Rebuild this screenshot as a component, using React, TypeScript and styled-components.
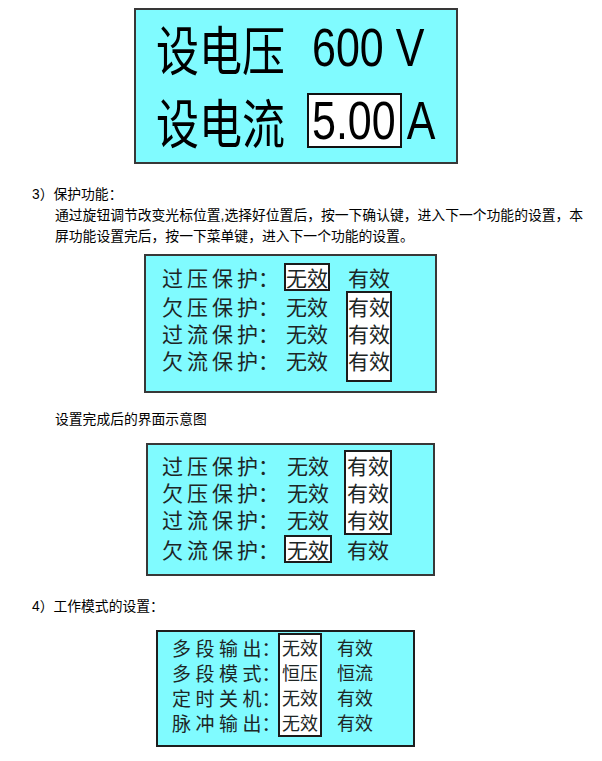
import React from "react";
import styled, { createGlobalStyle } from "styled-components";

const LCD_FILL = "#80fbff";
const INK = "#1b1b1b";
const CJK = `"Noto Sans CJK SC", sans-serif`;
const LATIN = `"Liberation Sans", "Noto Sans CJK SC", sans-serif`;

const GlobalStyle = createGlobalStyle`
  html, body {
    margin: 0;
    padding: 0;
    background: #fff;
  }
  body {
    font-family: ${LATIN};
    color: #000;
  }
`;

const Page = styled.div`
  width: 602px;
  padding-top: 8px;
  display: flex;
  flex-direction: column;
  align-items: flex-start;
`;

// cyan LCD screen frame
const Screen = styled.div<{
  $width: number;
  $left: number;
  $top?: number;
  $pad: string;
  $edge?: string;
}>`
  box-sizing: border-box;
  width: ${(p) => p.$width}px;
  margin: ${(p) => p.$top ?? 0}px 0 0 ${(p) => p.$left}px;
  padding: ${(p) => p.$pad};
  background: ${LCD_FILL};
  border: 2px solid ${(p) => p.$edge ?? "#383838"};
`;

/* ---- big voltage / current readout ---- */

const Readout = styled.div`
  display: grid;
  grid-template-columns: 151px auto 1fr;
  grid-auto-rows: 55px;
  row-gap: 18px;
  font-size: 43px;
  line-height: 55px;
  color: #000;
`;

const ReadoutLabel = styled.div`
  font-family: ${CJK};
  white-space: nowrap;
`;

const ReadoutValue = styled.div<{ $boxed?: boolean; $span?: boolean }>`
  box-sizing: border-box;
  justify-self: start;
  grid-column: ${(p) => (p.$span ? "2 / 4" : "auto")};
  font-family: ${LATIN};
  white-space: pre;
  line-height: 51px;
  padding: 0 4px 0 3px;
  border: 2px solid ${(p) => (p.$boxed ? "#111" : "transparent")};
  background: ${(p) => (p.$boxed ? "#fff" : "transparent")};
`;

const ReadoutUnit = styled.div`
  font-family: ${LATIN};
  padding-left: 5px;
`;

// the LCD font is tall and narrow
const Tall = styled.span`
  display: inline-block;
  transform: scaleY(1.25);
`;

/* ---- manual text ---- */

const Heading = styled.div<{ $top: number }>`
  margin: ${(p) => p.$top}px 0 0 32px;
  font-size: 13.8px;
  line-height: 21px;
  white-space: nowrap;
`;

const Para = styled.p<{ $top?: number }>`
  margin: ${(p) => p.$top ?? 0}px 0 0 0;
  padding-left: 55px;
  font-size: 13.8px;
  line-height: 21px;
  white-space: nowrap;
`;

/* ---- option screens ---- */

const Options = styled.div<{ $valueSize: number }>`
  display: flex;
  flex-direction: column;
  font-family: ${CJK};
  font-size: ${(p) => p.$valueSize}px;
  color: #1d2626;
`;

const Band = styled.div`
  display: flex;
  align-items: flex-start;
`;

const LabelColumn = styled.div<{
  $width: number;
  $size: number;
  $padBottom: number;
}>`
  flex: none;
  width: ${(p) => p.$width}px;
  display: flex;
  flex-direction: column;
  border-top: 2px solid transparent;
  border-bottom: 2px solid transparent;
  padding-bottom: ${(p) => p.$padBottom}px;
  font-size: ${(p) => p.$size}px;
`;

// wide tracking between label characters, none before the colon
const Spaced = styled.span<{ $spacing: number }>`
  letter-spacing: ${(p) => p.$spacing}px;
`;

const Cell = styled.div<{
  $boxed: boolean;
  $padX: number;
  $padBottom: number;
  $shift: number;
}>`
  flex: none;
  display: flex;
  flex-direction: column;
  margin-left: ${(p) => p.$shift}px;
  padding: 0 ${(p) => p.$padX}px ${(p) => p.$padBottom}px;
  border: 2px solid ${(p) => (p.$boxed ? INK : "transparent")};
  background: ${(p) => (p.$boxed ? "#fff" : "transparent")};
`;

const Entry = styled.div<{ $h: number }>`
  height: ${(p) => p.$h}px;
  line-height: ${(p) => p.$h}px;
  white-space: nowrap;
`;

type BandSpec = {
  rows: number;
  height: number;
  padBottom?: number;
  boxed: [boolean, boolean];
};

type OptionScreen = {
  labels: string[];
  columns: [string[], string[]];
  bands: BandSpec[];
  width: number;
  left: number;
  top: number;
  pad: string;
  edge?: string;
  labelWidth: number;
  labelSize: number;
  spacing: number;
  valueSize: number;
  padX: number;
  gap: number;
};

const fourEach = (s: string) => [s, s, s, s];

const protectionLabels = ["过压保护", "欠压保护", "过流保护", "欠流保护"];

const protectionEditing: OptionScreen = {
  labels: protectionLabels,
  columns: [fourEach("无效"), fourEach("有效")],
  bands: [
    { rows: 1, height: 24, boxed: [true, false] },
    { rows: 3, height: 27, padBottom: 6, boxed: [false, true] },
  ],
  width: 293,
  left: 144,
  top: 7,
  pad: "7px 0 9px 16px",
  labelWidth: 122,
  labelSize: 21,
  spacing: 4,
  valueSize: 21,
  padX: 0,
  gap: 16,
};

const protectionDone: OptionScreen = {
  labels: protectionLabels,
  columns: [fourEach("无效"), fourEach("有效")],
  bands: [
    { rows: 3, height: 27, boxed: [false, true] },
    { rows: 1, height: 24, boxed: [true, false] },
  ],
  width: 289,
  left: 146,
  top: 13,
  pad: "5px 0 11px 14px",
  labelWidth: 122,
  labelSize: 21,
  spacing: 4,
  valueSize: 21,
  padX: 1,
  gap: 12,
};

const workMode: OptionScreen = {
  labels: ["多段输出", "多段模式", "定时关机", "脉冲输出"],
  columns: [
    ["无效", "恒压", "无效", "无效"],
    ["有效", "恒流", "有效", "有效"],
  ],
  bands: [{ rows: 4, height: 25, boxed: [true, false] }],
  width: 259,
  left: 156,
  top: 13,
  pad: "1px 0 8px 14px",
  edge: "#1e1e1e",
  labelWidth: 106,
  labelSize: 19,
  spacing: 4.5,
  valueSize: 18,
  padX: 2,
  gap: 11,
};

const OptionPanel = ({ screen }: { screen: OptionScreen }) => {
  let start = 0;
  return (
    <Screen
      $width={screen.width}
      $left={screen.left}
      $top={screen.top}
      $pad={screen.pad}
      $edge={screen.edge}
    >
      <Options $valueSize={screen.valueSize}>
        {screen.bands.map((band, i) => {
          const from = start;
          start += band.rows;
          const slice = (list: string[]) => list.slice(from, from + band.rows);
          const pb = band.padBottom ?? 0;
          return (
            <Band key={i}>
              <LabelColumn
                $width={screen.labelWidth}
                $size={screen.labelSize}
                $padBottom={pb}
              >
                {slice(screen.labels).map((t, j) => (
                  <Entry key={j} $h={band.height}>
                    <Spaced $spacing={screen.spacing}>{t.slice(0, -1)}</Spaced>
                    {t.slice(-1)}：
                  </Entry>
                ))}
              </LabelColumn>
              {screen.columns.map((col, c) => (
                <Cell
                  key={c}
                  $boxed={band.boxed[c]}
                  $padX={screen.padX}
                  $padBottom={pb}
                  $shift={c === 0 ? 0 : screen.gap}
                >
                  {slice(col).map((t, j) => (
                    <Entry key={j} $h={band.height}>
                      {t}
                    </Entry>
                  ))}
                </Cell>
              ))}
            </Band>
          );
        })}
      </Options>
    </Screen>
  );
};

export default function App() {
  return (
    <>
      <GlobalStyle />
      <Page>
        <Screen $width={324} $left={134} $pad="10px 0 14px 20px">
          <Readout>
            <ReadoutLabel>
              <Tall>设电压</Tall>
            </ReadoutLabel>
            <ReadoutValue $span>
              <Tall>600 V</Tall>
            </ReadoutValue>
            <ReadoutLabel>
              <Tall>设电流</Tall>
            </ReadoutLabel>
            <ReadoutValue $boxed>
              <Tall>5.00</Tall>
            </ReadoutValue>
            <ReadoutUnit>
              <Tall>A</Tall>
            </ReadoutUnit>
          </Readout>
        </Screen>

        <Heading $top={20}>3）保护功能：</Heading>
        <Para>
          通过旋钮调节改变光标位置,选择好位置后，按一下确认键，进入下一个功能的设置，本
          <br />
          屏功能设置完后，按一下菜单键，进入下一个功能的设置。
        </Para>

        <OptionPanel screen={protectionEditing} />

        <Para $top={16}>设置完成后的界面示意图</Para>

        <OptionPanel screen={protectionDone} />

        <Heading $top={20}>4）工作模式的设置：</Heading>

        <OptionPanel screen={workMode} />
      </Page>
    </>
  );
}
